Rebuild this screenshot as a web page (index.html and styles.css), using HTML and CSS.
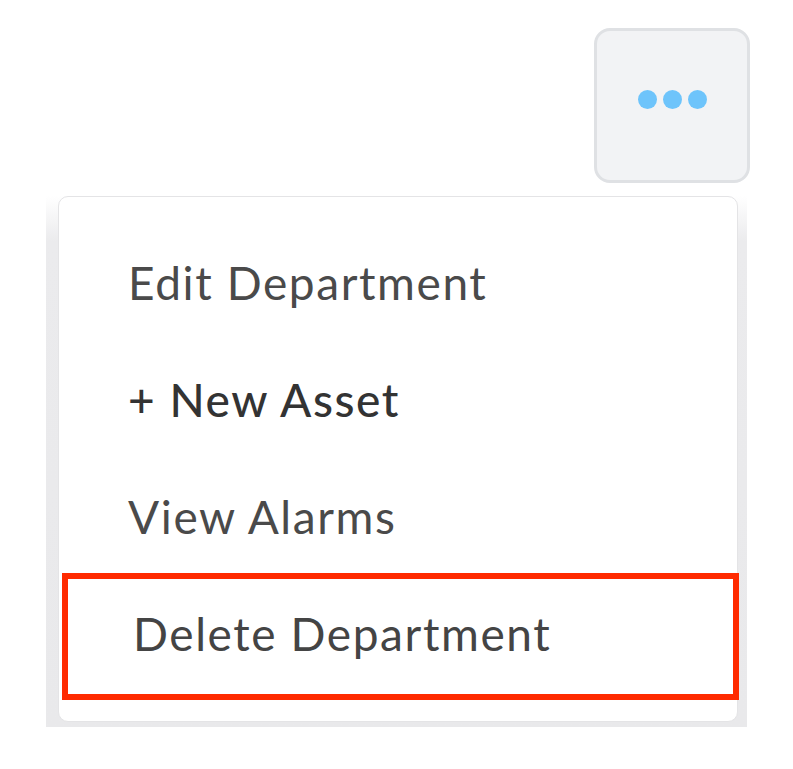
FILE: index.html
```html
<!DOCTYPE html>
<html lang="en">
<head>
<meta charset="utf-8">
<title>Department menu</title>
<link rel="stylesheet" href="styles.css">
</head>
<body>
<div class="page">
  <div class="toolbar">
    <button class="more-btn" type="button" aria-label="More">
      <span class="dot"></span><span class="dot"></span><span class="dot"></span>
    </button>
  </div>
  <div class="menu-shell">
    <ul class="menu">
      <li class="item">Edit Department</li>
      <li class="item item-strong">+ New Asset</li>
      <li class="item">View Alarms</li>
      <li class="item item-highlight">Delete Department</li>
    </ul>
  </div>
</div>
</body>
</html>
```
FILE: styles.css
```css
html, body {
  margin: 0;
  padding: 0;
  background: #ffffff;
}
.page {
  width: 793px;
  height: 769px;
  overflow: hidden;
  display: flex;
  flex-direction: column;
  font-family: "Lato", "Open Sans", sans-serif;
}
.toolbar {
  display: flex;
  justify-content: flex-end;
  padding: 28px 43px 0 0;
}
.more-btn {
  box-sizing: border-box;
  width: 156px;
  height: 155px;
  border: 3px solid #dfe1e4;
  border-radius: 16px;
  background: #f2f3f5;
  display: flex;
  align-items: center;
  justify-content: center;
  gap: 6px;
  padding: 0 0 12px 0;
}
.dot {
  width: 19px;
  height: 19px;
  border-radius: 50%;
  background: #6ec4fb;
}
.menu-shell {
  margin: 13px 0 0 46px;
  width: 701px;
  box-sizing: border-box;
  padding: 0 9px 5px 12px;
  background: linear-gradient(to bottom, #ffffff 0, #ebebed 45px, #e9e9eb 100%);
}
.menu {
  list-style: none;
  margin: 0;
  padding: 27px 0 21px 0;
  background: #ffffff;
  border: 1px solid #e4e4e6;
  border-radius: 10px;
  display: flex;
  flex-direction: column;
}
.item {
  height: 117px;
  display: flex;
  align-items: center;
  padding-left: 69px;
  font-size: 46px;
  color: #4a4a4a;
  letter-spacing: 1.6px;
}
.item-strong {
  color: #333333;
  font-weight: 500;
}
.item-highlight {
  box-sizing: border-box;
  height: 127px;
  margin: -2px -2px 0 3px;
  border: 6px solid #ff2a00;
  padding-left: 65px;
  padding-bottom: 6px;
  color: #444444;
}
```
